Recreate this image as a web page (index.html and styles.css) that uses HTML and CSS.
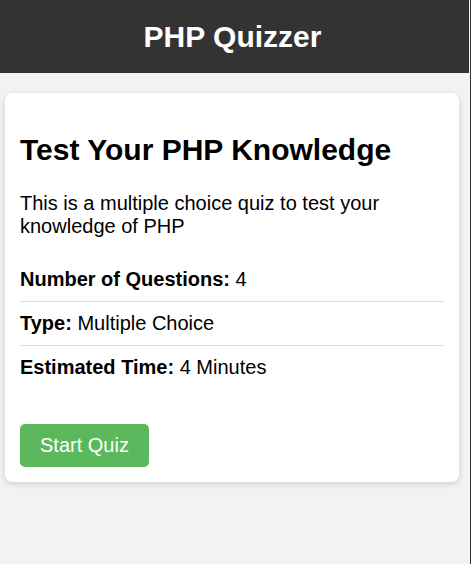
FILE: index.html
```html
<!DOCTYPE html>
<html lang="en">
<head>
<meta charset="utf-8">
<title>PHP Quizzer</title>
<link rel="stylesheet" href="styles.css">
</head>
<body>
  <header class="site-header">
    <h1 class="site-title">PHP Quizzer</h1>
  </header>
  <main class="card">
    <h2 class="card-title">Test Your PHP Knowledge</h2>
    <p class="card-intro">This is a multiple choice quiz to test your knowledge of PHP</p>
    <ul class="facts">
      <li class="fact"><strong>Number of Questions:</strong> 4</li>
      <li class="fact"><strong>Type:</strong> Multiple Choice</li>
      <li class="fact"><strong>Estimated Time:</strong> 4 Minutes</li>
    </ul>
    <a class="start-btn" href="#">Start Quiz</a>
  </main>
</body>
</html>
```

FILE: styles.css
```css
html {
  background: #f2f2f2;
}
body {
  margin: 0;
  min-height: 100vh;
  box-sizing: border-box;
  border-right: 1px solid #333;
  font-family: "Liberation Sans", Arial, sans-serif;
  font-size: 20px;
  color: #000;
}
.site-header {
  background: #333;
  color: #fff;
  height: 73px;
  margin-right: 1px;
  padding-right: 4px;
  display: flex;
  align-items: center;
  justify-content: center;
}
.site-title {
  margin: 0;
  font-size: 30px;
  font-weight: bold;
}
.card {
  display: block;
  background: #fff;
  margin: 20px 11px 0 5px;
  padding: 15px 15px 15px;
  border-radius: 8px;
  box-shadow: 0 2px 6px rgba(0, 0, 0, 0.15);
}
.card-title {
  margin: 25px 0 25px;
  font-size: 30px;
  font-weight: bold;
}
.card-intro {
  margin: 0 0 20px;
}
.facts {
  list-style: none;
  margin: 0 0 35px;
  padding: 0;
}
.fact {
  padding: 10px 0;
  border-bottom: 1px solid #ddd;
}
.fact:last-child {
  border-bottom: none;
}
.start-btn {
  display: inline-block;
  background: #5cb85c;
  color: #fff;
  text-decoration: none;
  padding: 10px 20px;
  border-radius: 5px;
}
```
